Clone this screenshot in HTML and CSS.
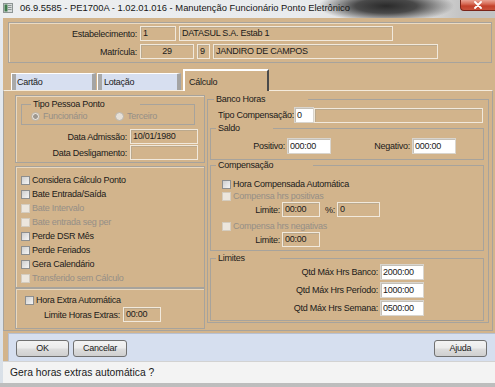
FILE: index.html
```html
<!DOCTYPE html>
<html lang="pt">
<head>
<meta charset="utf-8">
<title>Manutenção Funcionário Ponto Eletrônico</title>
<link rel="stylesheet" href="styles.css">
</head>
<body>
<div class="win">
  <div class="titlebar">
    <svg class="appicon" width="10" height="10" viewBox="0 0 10 10">
      <rect x="0.5" y="0.5" width="9" height="9" fill="#d8dcdc" stroke="#8c9494"/>
      <rect x="1.5" y="1.5" width="3" height="7" fill="#3f7a4c"/>
      <rect x="5" y="2" width="3.5" height="1" fill="#8c9494"/>
      <rect x="5" y="4" width="3.5" height="1" fill="#8c9494"/>
      <rect x="5" y="6" width="3.5" height="1" fill="#8c9494"/>
    </svg>
    <span class="title">06.9.5585 - PE1700A - 1.02.01.016 - Manutenção Funcionário Ponto Eletrônico</span>
    <div class="close">
      <svg width="10" height="8" viewBox="0 0 10 8"><path d="M2 1 L8 7 M8 1 L2 7" stroke="#fff" stroke-width="1.8" stroke-linecap="round"/></svg>
    </div>
  </div>
  <div class="body">
    <div class="frame-left"></div>
    <div class="main">
      <div class="client">
        <div class="topgroup">
          <div class="trow">
            <span class="tlabel">Estabelecimento:</span>
            <span class="fld w36">1</span>
            <span class="fld w214">DATASUL S.A. Estab 1</span>
          </div>
          <div class="trow second">
            <span class="tlabel">Matrícula:</span>
            <span class="fld w54 center">29</span>
            <span class="fld w13">9</span>
            <span class="fld w225">JANDIRO DE CAMPOS</span>
          </div>
        </div>

        <div class="tabs">
          <div class="tab t1">Cartão</div>
          <div class="tab t2">Lotação</div>
          <div class="tab active">Cálculo</div>
        </div>

        <div class="panel">
          <div class="leftcol">
            <div class="sec sec1">
              <fieldset class="tipo">
                <legend class="lg-tipo">Tipo Pessoa Ponto</legend>
                <div class="radios">
                  <span class="ritem first"><span class="rd on"></span><span class="dis">Funcionário</span></span>
                  <span class="ritem"><span class="rd"></span><span class="dis">Terceiro</span></span>
                </div>
              </fieldset>
              <div class="drow">
                <span class="dlabel">Data Admissão:</span>
                <span class="fld w68">10/01/1980</span>
              </div>
              <div class="drow d2">
                <span class="dlabel">Data Desligamento:</span>
                <span class="fld w68"></span>
              </div>
            </div>

            <div class="sec sec2">
              <div class="cbrow"><span class="cb"></span>Considera Cálculo Ponto</div>
              <div class="cbrow"><span class="cb"></span>Bate Entrada/Saída</div>
              <div class="cbrow dis"><span class="cb off"></span>Bate Intervalo</div>
              <div class="cbrow dis"><span class="cb off"></span>Bate entrada seg per</div>
              <div class="cbrow"><span class="cb"></span>Perde DSR Mês</div>
              <div class="cbrow"><span class="cb"></span>Perde Feriados</div>
              <div class="cbrow"><span class="cb"></span>Gera Calendário</div>
              <div class="cbrow dis"><span class="cb off"></span>Transferido sem Cálculo</div>
            </div>

            <div class="sec sec3">
              <div class="cbrow short"><span class="cb"></span>Hora Extra Automática</div>
              <div class="lrow">
                <span class="llabel">Limite Horas Extras:</span>
                <span class="fld w38">00:00</span>
              </div>
            </div>
          </div>

          <fieldset class="banco">
            <legend class="lg-banco">Banco Horas</legend>
            <div class="tcrow">
              <span class="tclabel">Tipo Compensação:</span>
              <span class="fld white w20">0</span>
              <span class="fld w169"></span>
            </div>

            <fieldset class="inner saldo">
              <legend class="lg-saldo">Saldo</legend>
              <div class="srow">
                <span class="slabel1">Positivo:</span>
                <span class="fld white w44">000:00</span>
                <span class="slabel2">Negativo:</span>
                <span class="fld white w44">000:00</span>
              </div>
            </fieldset>

            <fieldset class="inner comp">
              <legend class="lg-comp">Compensação</legend>
              <div class="cbrow crow first"><span class="cb"></span>Hora Compensada Automática</div>
              <div class="cbrow crow dis"><span class="cb off"></span>Compensa hrs positivas</div>
              <div class="limrow">
                <span class="limlabel">Limite:</span>
                <span class="fld w38">00:00</span>
                <span class="pctlabel">%:</span>
                <span class="fld w43">0</span>
              </div>
              <div class="cbrow crow dis gap"><span class="cb off"></span>Compensa hrs negativas</div>
              <div class="limrow">
                <span class="limlabel">Limite:</span>
                <span class="fld w38">00:00</span>
              </div>
            </fieldset>

            <fieldset class="inner limites">
              <legend class="lg-lim">Limites</legend>
              <div class="qrow">
                <span class="qlabel">Qtd Máx Hrs Banco:</span>
                <span class="fld white w44">2000:00</span>
              </div>
              <div class="qrow">
                <span class="qlabel">Qtd Máx Hrs Período:</span>
                <span class="fld white w44">1000:00</span>
              </div>
              <div class="qrow">
                <span class="qlabel">Qtd Máx Hrs Semana:</span>
                <span class="fld white w44">0500:00</span>
              </div>
            </fieldset>
          </fieldset>
        </div>

        <div class="btnbar">
          <button class="btn">OK</button>
          <button class="btn cancel">Cancelar</button>
          <button class="btn help">Ajuda</button>
        </div>
      </div>
      <div class="status">Gera horas extras automática ?</div>
    </div>
  </div>
</div>
</body>
</html>
```

FILE: styles.css
```css
* { box-sizing: border-box; }
html, body { margin: 0; padding: 0; }
body {
  width: 495px;
  height: 387px;
  overflow: hidden;
  background: linear-gradient(#cfcfcf, #bdbdbd);
  font-family: "Liberation Sans", Arial, sans-serif;
  font-size: 9px;
  letter-spacing: -0.25px;
  color: #1a1a1a;
}
.win { width: 495px; height: 383px; display: flex; flex-direction: column; }

/* title bar */
.titlebar {
  height: 18px;
  flex: none;
  display: flex;
  align-items: flex-start;
  background:
    radial-gradient(ellipse 68px 16px at 386px 6px, rgba(36,36,36,0.97) 0%, rgba(36,36,36,0.8) 45%, rgba(36,36,36,0) 100%),
    linear-gradient(90deg, #eceef0 0%, #e9ebed 60%, #dcdcdc 85%, #c4c4c4 93%);
}
.appicon { margin: 3px 0 0 3px; flex: none; }
.title {
  margin-left: 7px;
  font-size: 9.4px;
  letter-spacing: 0;
  line-height: 11px;
  padding-top: 2px;
  color: #151515;
  white-space: nowrap;
}
.close {
  margin-left: auto;
  width: 35px;
  height: 11px;
  flex: none;
  display: flex;
  align-items: center;
  justify-content: center;
  background: linear-gradient(#e9a394 0%, #d76a55 40%, #c2402a 60%, #c9523c 100%);
  border: 1px solid #7a2418;
  border-top: 0;
  border-right: 0;
  border-radius: 0 0 0 4px;
}

/* frame */
.body { display: flex; height: 365px; }
.frame-left { width: 3px; background: linear-gradient(#e6ebf1, #d9e0e8); flex: none; }
.main { width: 492px; display: flex; flex-direction: column; }
.client {
  height: 343px;
  background: #d2b48c;
  padding-top: 4px;
}

/* top group */
.topgroup {
  margin-left: 5px;
  width: 484px;
  height: 41px;
  border: 1px solid #a7a39c;
  box-shadow: inset 1px 1px 0 #ebdbc3;
  padding-top: 3px;
}
.trow { display: flex; height: 15px; gap: 3px; align-items: center; }
.trow.second { margin-top: 3px; }
.tlabel { width: 128px; text-align: right; }

/* fields */
.fld {
  height: 15px;
  flex: none;
  border: 1px solid #f1e9dc;
  box-shadow: inset 1px 1px 0 #bba98d;
  background: #d2b48c;
  padding-left: 2px;
  line-height: 13px;
  white-space: nowrap;
  overflow: hidden;
}
.fld.white {
  background: #fff;
  height: 16px;
  line-height: 14px;
  border: 1px solid #d9d5ce;
  box-shadow: inset 1px 1px 0 #c4c0b8;
}
.fld.center { text-align: center; padding-left: 0; }
.w13 { width: 13px; }
.w20 { width: 20px; }
.w36 { width: 36px; }
.w38 { width: 38px; }
.w43 { width: 43px; }
.w44 { width: 44px; }
.w54 { width: 54px; }
.w68 { width: 68px; }
.w169 { width: 169px; }
.w214 { width: 214px; }
.w225 { width: 225px; }

/* tabs */
.tabs {
  display: flex;
  align-items: flex-end;
  height: 21px;
  margin-top: 6px;
  padding-left: 8px;
}
.tab {
  height: 17px;
  background: #d7dff0;
  border-top: 1px solid #ffffff;
  border-left: 1px solid #ffffff;
  border-right: 4px solid #a4a4a4;
  box-shadow: inset 4px 0 0 #a9a9a9;
  padding-left: 5px;
  line-height: 16px;
}
.tab.t1 { width: 85px; margin-right: 1px; }
.tab.t2 { width: 84px; margin-right: 2px; padding-left: 6px; }
.tab.active {
  width: 86px;
  height: 22px;
  background: #d2b48c;
  border: 2px solid #ffffff;
  border-right: 2px solid #4a4a4a;
  border-bottom: 0;
  box-shadow: none;
  padding: 3px 0 0 4px;
  line-height: 16px;
  margin-bottom: -1px;
  position: relative;
  z-index: 1;
}

/* panel */
.panel {
  width: 490px;
  height: 241px;
  border: 1px solid #a7a39c;
  border-top-color: #f4ebdc;
  display: flex;
  align-items: flex-start;
  padding: 3px 0 0 11px;
}
.leftcol { width: 190px; margin-top: 1px; display: flex; flex-direction: column; flex: none; }
.sec {
  border: 1px solid #a7a39c;
  box-shadow: inset 1px 1px 0 #e9d8bf;
}
.sec1 { height: 68px; }
.sec2 { height: 122px; margin-top: 3px; padding: 6px 0 0 5px; }
.sec3 { height: 41px; padding: 5px 0 0 9px; }

fieldset { margin: 0; padding: 0; border: 1px solid #a7a39c; min-width: 0; }
legend {
  padding: 0 0 0 2px;
  height: 11px;
  line-height: 11px;
  white-space: nowrap;
}

.tipo { margin: 3px 0 0 5px; width: 174px; padding-bottom: 2px; }
.lg-tipo { margin-left: 9px; width: 109px; }
.radios { display: flex; height: 12px; align-items: center; padding-left: 9px; }
.ritem { display: flex; align-items: center; }
.ritem.first { width: 84px; }
.rd {
  width: 9px;
  height: 9px;
  border-radius: 50%;
  border: 1px solid #bbb4aa;
  background: #e6e0d7;
  margin-right: 3px;
  flex: none;
}
.rd.on { background: radial-gradient(circle, #9d978f 0 2px, #e6e0d7 2.6px); }
.dis { color: #958f87; }

.drow { display: flex; align-items: center; height: 15px; margin-top: 4px; }
.drow.d2 { margin-top: 1px; }
.dlabel { width: 111px; text-align: right; margin-right: 3px; }

.cbrow { display: flex; align-items: center; height: 14px; white-space: nowrap; }
.cbrow.short { height: 12px; }
.cb {
  width: 9px;
  height: 9px;
  border: 1px solid #8d8e8e;
  background: linear-gradient(135deg, #cfcfcf, #f5f5f5);
  margin-right: 2px;
  flex: none;
}
.cb.off { border-color: #d4ccbf; background: #ece6dd; }
.cbrow.dis { color: #958f87; }

.lrow { display: flex; align-items: center; height: 15px; margin-top: 1px; }
.llabel { width: 95px; text-align: right; margin-right: 3px; }

/* right column */
.banco { margin-left: 2px; width: 282px; padding-bottom: 1px; }
.lg-banco { margin-left: 6px; width: 94px; }
.tcrow { display: flex; align-items: center; height: 16px; margin-top: 2px; padding-left: 10px; }
.tclabel { width: 74px; margin-right: 2px; white-space: nowrap; }

.inner { margin: 0 4px 0 2px; width: 274px; }
.saldo { padding-bottom: 5px; }
.lg-saldo { margin-left: 5px; width: 57px; }
.srow { display: flex; align-items: center; height: 16px; margin-top: 4px; }
.slabel1 { width: 74px; text-align: right; margin-right: 2px; }
.slabel2 { width: 79px; text-align: right; margin-right: 2px; }

.comp { padding-bottom: 3px; }
.lg-comp { margin-left: 5px; width: 97px; }
.crow { height: 12px; padding-left: 11px; }
.crow.first { margin-top: 7px; }
.crow.gap { margin-top: 3px; }
.limrow { display: flex; align-items: center; height: 15px; }
.limlabel { width: 69px; text-align: right; margin-right: 2px; }
.pctlabel { width: 15px; text-align: right; margin-right: 2px; }

.limites { margin-top: 2px; padding-bottom: 4px; }
.lg-lim { margin-left: 5px; width: 64px; }
.qrow { display: flex; align-items: center; height: 16px; margin-top: 2px; }
.qrow:first-of-type { margin-top: 0; }
.qlabel { width: 167px; text-align: right; margin-right: 2px; }

/* buttons */
.btnbar {
  margin: 2px 0 0 5px;
  height: 28px;
  background: #d6dfef;
  border-top: 1px solid #b7c0d1;
  border-left: 1px solid #b7c0d1;
  display: flex;
  align-items: flex-start;
  padding: 6px 8px 0 7px;
}
.btn {
  width: 53px;
  height: 17px;
  padding: 0;
  margin: 0;
  border: 1px solid #707070;
  border-radius: 3px;
  background: linear-gradient(#f3f3f3 0%, #ebebeb 48%, #dddddd 52%, #cfcfcf 100%);
  font-family: inherit;
  font-size: 9px;
  letter-spacing: -0.25px;
  color: #1a1a1a;
  text-align: center;
  line-height: 15px;
}
.btn.cancel { width: 54px; margin-left: 4px; }
.btn.help { margin-left: auto; }

/* status */
.status {
  height: 22px;
  background: #f3f3f3;
  border-top: 1px solid #d2d2d2;
  padding-left: 7px;
  line-height: 21px;
  font-size: 10.3px;
  letter-spacing: 0;
  color: #1a1a1a;
}
```
